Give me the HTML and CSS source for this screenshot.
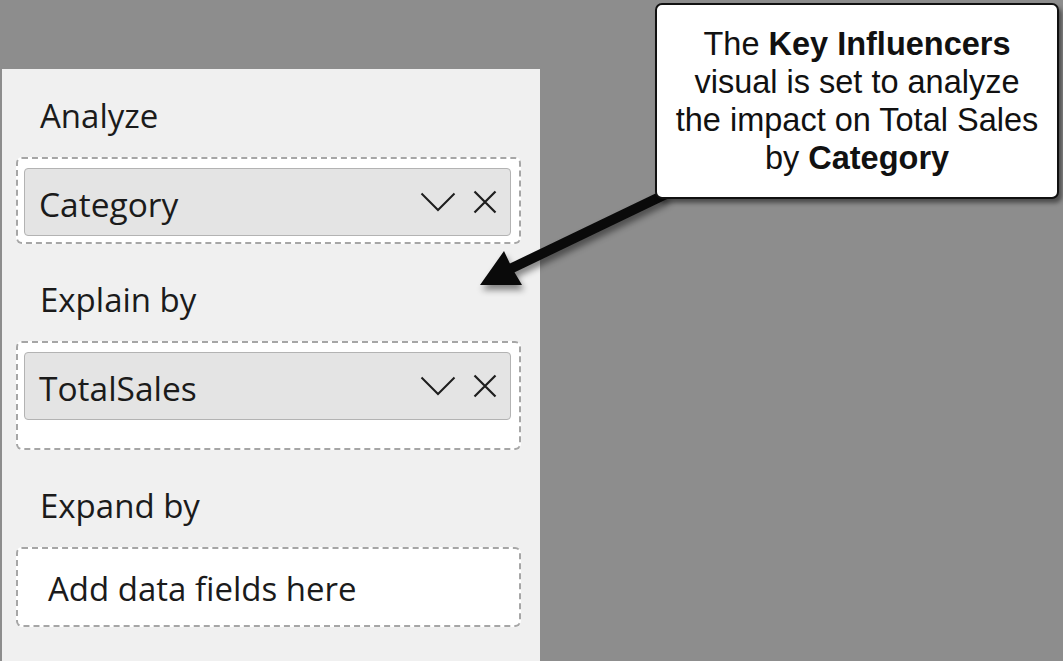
FILE: index.html
```html
<!DOCTYPE html>
<html>
<head>
<meta charset="utf-8">
<link rel="stylesheet" href="styles.css">
</head>
<body>
<div class="page">
  <div class="panel">
    <div class="label">Analyze</div>
    <div class="well well-tight">
      <div class="pill">
        <span class="pill-text">Category</span>
        <span class="pill-icons">
          <svg class="chev" viewBox="0 0 36 20" width="36" height="20"><polyline points="1.5,1.5 18,18 34.5,1.5" fill="none" stroke="#1e1e1e" stroke-width="2"/></svg>
          <svg class="close" viewBox="0 0 24 24" width="24" height="24"><path d="M1.5 1.5 L22.5 22.5 M22.5 1.5 L1.5 22.5" fill="none" stroke="#1e1e1e" stroke-width="2.2"/></svg>
        </span>
      </div>
    </div>
    <div class="label">Explain by</div>
    <div class="well well-loose">
      <div class="pill">
        <span class="pill-text">TotalSales</span>
        <span class="pill-icons">
          <svg class="chev" viewBox="0 0 36 20" width="36" height="20"><polyline points="1.5,1.5 18,18 34.5,1.5" fill="none" stroke="#1e1e1e" stroke-width="2"/></svg>
          <svg class="close" viewBox="0 0 24 24" width="24" height="24"><path d="M1.5 1.5 L22.5 22.5 M22.5 1.5 L1.5 22.5" fill="none" stroke="#1e1e1e" stroke-width="2.2"/></svg>
        </span>
      </div>
    </div>
    <div class="label">Expand by</div>
    <div class="well well-empty">
      <span class="placeholder">Add data fields here</span>
    </div>
  </div>
</div>

<svg class="arrow" width="1063" height="661" viewBox="0 0 1063 661">
  <line x1="666" y1="194" x2="510" y2="269" stroke="#0a0a0a" stroke-width="10" stroke-linecap="butt"/>
  <polygon points="480,285 504,251 512,268 522,285" fill="#0a0a0a"/>
</svg>

<div class="callout">
  The <b>Key Influencers</b><br>
  visual is set to analyze<br>
  the impact on Total Sales<br>
  by <b>Category</b>
</div>
</body>
</html>
```

FILE: styles.css
```css
html, body {
  margin: 0;
  padding: 0;
}

body {
  width: 1063px;
  height: 661px;
  overflow: hidden;
  background: #8d8d8d;
  font-family: "Open Sans", "Noto Sans", sans-serif;
  color: #1b1b1b;
}

.page {
  display: flex;
  align-items: flex-start;
  height: 661px;
}

.panel {
  margin-top: 69px;
  margin-left: 2px;
  width: 538px;
  height: 592px;
  box-sizing: border-box;
  padding: 25px 19px 0 14px;
  background: #f0f0f0;
  display: flex;
  flex-direction: column;
}

.label {
  font-size: 33px;
  line-height: 44px;
  height: 44px;
  padding-left: 24px;
  margin-bottom: 19px;
}

.well {
  border: 2px dashed #a6a6a6;
  border-radius: 6px;
  background: #ffffff;
  margin-bottom: 34px;
}

.well-tight {
  padding: 9px 8px 6px 6px;
}

.well-loose {
  padding: 9px 8px 28px 6px;
}

.well-empty {
  height: 77px;
  display: flex;
  align-items: center;
  padding-left: 30px;
}

.placeholder {
  font-size: 33px;
  line-height: 44px;
  padding-top: 3px;
}

.pill {
  height: 68px;
  box-sizing: border-box;
  border: 1px solid #b3b3b3;
  border-radius: 4px;
  background: #e4e4e4;
  display: flex;
  align-items: center;
  justify-content: space-between;
  padding: 0 13px 0 14px;
}

.pill-text {
  font-size: 33.5px;
  line-height: 44px;
  padding-top: 4px;
}

.pill-icons {
  display: flex;
  align-items: center;
  gap: 17px;
}

.chev, .close {
  display: block;
}

.arrow {
  position: absolute;
  left: 0;
  top: 0;
  pointer-events: none;
  filter: drop-shadow(2px 5px 3px rgba(0, 0, 0, 0.45));
}

.callout {
  position: absolute;
  left: 655px;
  top: 3px;
  width: 404px;
  height: 196px;
  box-sizing: border-box;
  border: 2px solid #111;
  border-radius: 7px;
  background: #ffffff;
  box-shadow: 3px 4px 4px rgba(0, 0, 0, 0.45);
  padding: 20px 4px;
  text-align: center;
  font-family: "Liberation Sans", Arial, sans-serif;
  font-size: 32.5px;
  line-height: 38px;
  color: #111;
}

.callout b {
  font-weight: bold;
}
```
